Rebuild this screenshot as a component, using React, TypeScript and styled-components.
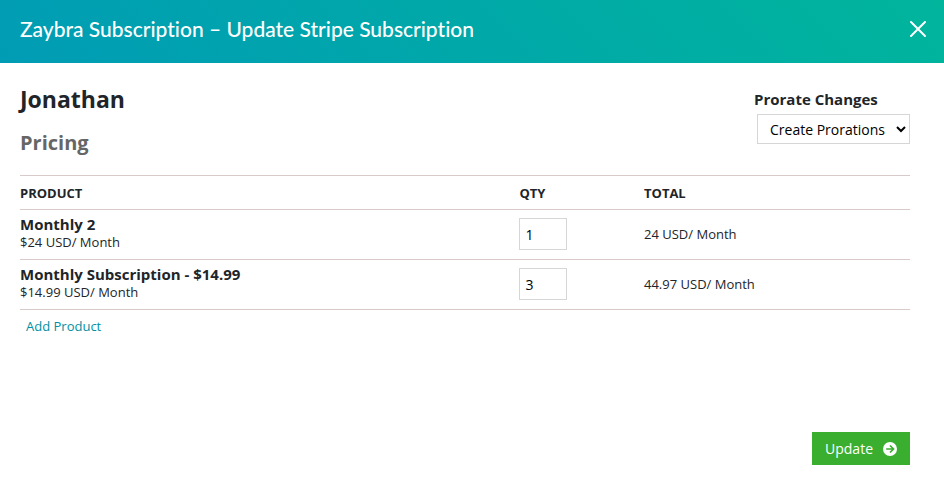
import React, { useState } from "react";
import styled, { createGlobalStyle } from "styled-components";

const GlobalStyle = createGlobalStyle`
  *, *::before, *::after { box-sizing: border-box; }
  body {
    margin: 0;
    background: #fff;
    color: #212529;
    font-family: "Open Sans", "Noto Sans", sans-serif;
    font-size: 13px;
    line-height: 18px;
  }
  button, input, select { font: inherit; border-radius: 0; }
`;

const Page = styled.div`
  display: flex;
  flex-direction: column;
  min-height: 100vh;
`;

const Header = styled.header`
  display: flex;
  align-items: flex-start;
  justify-content: space-between;
  padding: 15px 16px 20px 20px;
  background: linear-gradient(45deg, #009cb5, #00b59c);
  color: #fff;
`;

const HeaderTitle = styled.h1`
  margin: 0;
  font-family: Lato, "Open Sans", sans-serif;
  font-size: 21px;
  font-variant-ligatures: none;
  font-weight: 500;
  line-height: 28px;
`;

const CloseButton = styled.button`
  display: flex;
  padding: 4px 0;
  border: 0;
  background: none;
  color: inherit;
  cursor: pointer;
`;

const Content = styled.main`
  display: flex;
  flex: 1;
  flex-direction: column;
  padding: 19px 34px 17px 20px;
`;

const Summary = styled.section`
  display: flex;
  justify-content: space-between;
  margin-bottom: 18px;
`;

const CustomerName = styled.h2`
  margin: 0 0 13px;
  font-size: 23px;
  font-weight: 700;
  line-height: 34px;
`;

const SectionTitle = styled.h3`
  margin: 0;
  color: #666;
  font-size: 20px;
  font-weight: 700;
  line-height: 28px;
`;

const Proration = styled.div`
  display: flex;
  flex-direction: column;
  align-items: flex-end;
  padding-top: 6px;
`;

const ProrationLabel = styled.label`
  align-self: flex-start;
  margin-bottom: 4px;
  font-size: 15px;
  font-weight: 700;
  line-height: 22px;
`;

const ProrationSelect = styled.select`
  width: 153px;
  height: 30px;
  margin-left: 3px;
  padding: 0 0 0 8px;
  border: 1px solid #d6d6d6;
  background: #fff;
  color: #000;
  font-size: 14px;
`;

const ProductTable = styled.table`
  width: 100%;
  border-collapse: collapse;
  table-layout: fixed;
  text-align: left;
`;

const HeadCell = styled.th<{ $share?: string }>`
  width: ${({ $share }) => $share ?? "auto"};
  height: 34px;
  padding: 0;
  border: solid #d9caca;
  border-width: 1px 0;
  text-transform: uppercase;
`;

const Cell = styled.td`
  height: 50px;
  padding: 0 0 2px;
  border-bottom: 1px solid #d9caca;
  vertical-align: middle;
`;

const ProductCell = styled(Cell)`
  padding-bottom: 4px;
`;

const ProductName = styled.div`
  font-size: 15px;
  font-weight: 700;
`;

const QuantityInput = styled.input`
  display: block;
  width: 48px;
  height: 32px;
  padding: 2px 5px 0;
  border: 1px solid #d6d6d6;
  background: #fff;
  color: #000;
  font-size: 14px;
`;

const AddProduct = styled.a`
  align-self: flex-start;
  margin: 7px 6px 20px;
  color: #0091a3;
  text-decoration: none;
`;

const UpdateButton = styled.button`
  display: flex;
  align-items: center;
  align-self: flex-end;
  gap: 10px;
  height: 33px;
  margin-top: auto;
  padding: 0 13px;
  border: 0;
  background: #3aae2e;
  color: #fff;
  font-size: 14px;
  cursor: pointer;
`;

const products = [
  { name: "Monthly 2", price: 24, quantity: 1 },
  { name: "Monthly Subscription - $14.99", price: 14.99, quantity: 3 },
];

const money = (amount: number) =>
  Number.isInteger(amount) ? String(amount) : amount.toFixed(2);

function CloseIcon() {
  return (
    <svg width="20" height="20" viewBox="0 0 20 20" fill="none" stroke="currentColor" strokeWidth="2" strokeLinecap="round" aria-hidden="true">
      <path d="M3 3 17 17M17 3 3 17" />
    </svg>
  );
}

function ArrowCircleIcon() {
  return (
    <svg width="14" height="14" viewBox="0 0 14 14" aria-hidden="true">
      <circle cx="7" cy="7" r="7" fill="currentColor" />
      <path d="M3.2 7h7M7 3.5 10.5 7 7 10.5" fill="none" stroke="#3aae2e" strokeWidth="1.7" />
    </svg>
  );
}

export default function App() {
  const [quantities, setQuantities] = useState(products.map((p) => p.quantity));

  const changeQuantity = (index: number, value: string) =>
    setQuantities((current) =>
      current.map((q, i) => (i === index ? Number(value.replace(/\D/g, "")) : q))
    );

  return (
    <Page>
      <GlobalStyle />
      <Header>
        <HeaderTitle>Zaybra Subscription – Update Stripe Subscription</HeaderTitle>
        <CloseButton type="button" aria-label="Close">
          <CloseIcon />
        </CloseButton>
      </Header>
      <Content>
        <Summary>
          <div>
            <CustomerName>Jonathan</CustomerName>
            <SectionTitle>Pricing</SectionTitle>
          </div>
          <Proration>
            <ProrationLabel htmlFor="proration">Prorate Changes</ProrationLabel>
            <ProrationSelect id="proration" defaultValue="create">
              <option value="create">Create Prorations</option>
              <option value="none">None</option>
            </ProrationSelect>
          </Proration>
        </Summary>
        <ProductTable>
          <colgroup>
            <col />
            <col />
            <col />
          </colgroup>
          <thead>
            <tr>
              <HeadCell scope="col">Product</HeadCell>
              <HeadCell scope="col" $share="14%">Qty</HeadCell>
              <HeadCell scope="col" $share="266px">Total</HeadCell>
            </tr>
          </thead>
          <tbody>
            {products.map((product, index) => (
              <tr key={product.name}>
                <ProductCell>
                  <ProductName>{product.name}</ProductName>
                  ${money(product.price)} USD/ Month
                </ProductCell>
                <Cell>
                  <QuantityInput
                    type="text"
                    inputMode="numeric"
                    aria-label={`Quantity of ${product.name}`}
                    value={quantities[index]}
                    onChange={(event) => changeQuantity(index, event.target.value)}
                  />
                </Cell>
                <Cell>{money(product.price * quantities[index])} USD/ Month</Cell>
              </tr>
            ))}
          </tbody>
        </ProductTable>
        <AddProduct href="#add-product">Add Product</AddProduct>
        <UpdateButton type="button">
          Update
          <ArrowCircleIcon />
        </UpdateButton>
      </Content>
    </Page>
  );
}
